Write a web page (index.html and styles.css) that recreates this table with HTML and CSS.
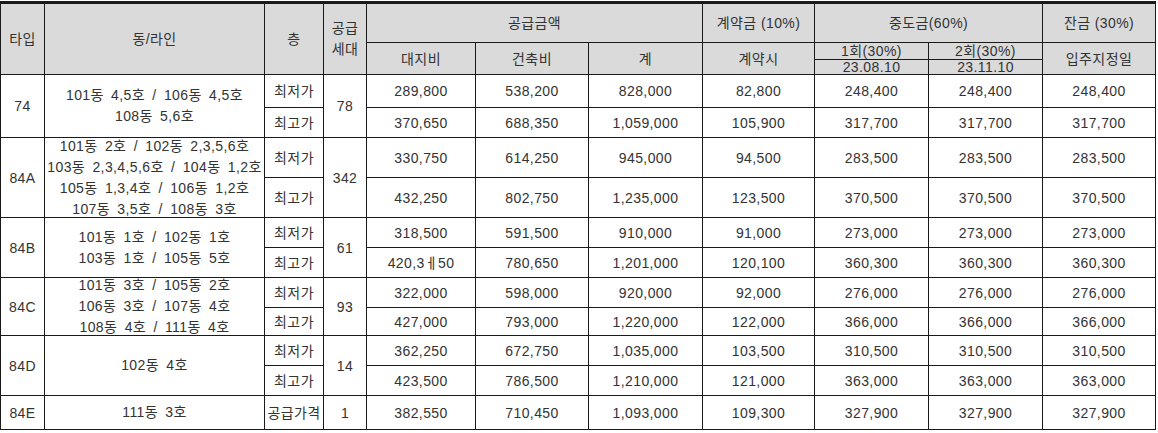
FILE: index.html
```html
<!DOCTYPE html>
<html lang="ko">
<head>
<meta charset="utf-8">
<title>공급금액</title>
<link rel="stylesheet" href="styles.css">
</head>
<body>
<div class="table">
  <div class="c h rs2">타입</div>
  <div class="c h rs2">동/라인</div>
  <div class="c h rs2">층</div>
  <div class="c h rs2 two">공급<br>세대</div>
  <div class="c h cs3">공급금액</div>
  <div class="c h">계약금 (10%)</div>
  <div class="c h cs2">중도금(60%)</div>
  <div class="c h">잔금 (30%)</div>

  <div class="c h">대지비</div>
  <div class="c h">건축비</div>
  <div class="c h">계</div>
  <div class="c h">계약시</div>
  <div class="c h split"><span class="top">1회(30%)</span><span class="bot">23.08.10</span></div>
  <div class="c h split"><span class="top">2회(30%)</span><span class="bot">23.11.10</span></div>
  <div class="c h">입주지정일</div>

  <!-- 74 -->
  <div class="c rs2">74</div>
  <div class="c rs2 lines">101동 4,5호 / 106동 4,5호<br>108동 5,6호</div>
  <div class="c">최저가</div>
  <div class="c rs2">78</div>
  <div class="c">289,800</div><div class="c">538,200</div><div class="c">828,000</div><div class="c">82,800</div><div class="c">248,400</div><div class="c">248,400</div><div class="c">248,400</div>
  <div class="c">최고가</div>
  <div class="c">370,650</div><div class="c">688,350</div><div class="c">1,059,000</div><div class="c">105,900</div><div class="c">317,700</div><div class="c">317,700</div><div class="c">317,700</div>

  <!-- 84A -->
  <div class="c rs2">84A</div>
  <div class="c rs2 lines">101동 2호 / 102동 2,3,5,6호<br>103동 2,3,4,5,6호 / 104동 1,2호<br>105동 1,3,4호 / 106동 1,2호<br>107동 3,5호 / 108동 3호</div>
  <div class="c">최저가</div>
  <div class="c rs2">342</div>
  <div class="c">330,750</div><div class="c">614,250</div><div class="c">945,000</div><div class="c">94,500</div><div class="c">283,500</div><div class="c">283,500</div><div class="c">283,500</div>
  <div class="c">최고가</div>
  <div class="c">432,250</div><div class="c">802,750</div><div class="c">1,235,000</div><div class="c">123,500</div><div class="c">370,500</div><div class="c">370,500</div><div class="c">370,500</div>

  <!-- 84B -->
  <div class="c rs2">84B</div>
  <div class="c rs2 lines">101동 1호 / 102동 1호<br>103동 1호 / 105동 5호</div>
  <div class="c">최저가</div>
  <div class="c rs2">61</div>
  <div class="c">318,500</div><div class="c">591,500</div><div class="c">910,000</div><div class="c">91,000</div><div class="c">273,000</div><div class="c">273,000</div><div class="c">273,000</div>
  <div class="c">최고가</div>
  <div class="c">420,3ㅔ50</div><div class="c">780,650</div><div class="c">1,201,000</div><div class="c">120,100</div><div class="c">360,300</div><div class="c">360,300</div><div class="c">360,300</div>

  <!-- 84C -->
  <div class="c rs2">84C</div>
  <div class="c rs2 lines">101동 3호 / 105동 2호<br>106동 3호 / 107동 4호<br>108동 4호 / 111동 4호</div>
  <div class="c">최저가</div>
  <div class="c rs2">93</div>
  <div class="c">322,000</div><div class="c">598,000</div><div class="c">920,000</div><div class="c">92,000</div><div class="c">276,000</div><div class="c">276,000</div><div class="c">276,000</div>
  <div class="c">최고가</div>
  <div class="c">427,000</div><div class="c">793,000</div><div class="c">1,220,000</div><div class="c">122,000</div><div class="c">366,000</div><div class="c">366,000</div><div class="c">366,000</div>

  <!-- 84D -->
  <div class="c rs2">84D</div>
  <div class="c rs2 lines">102동 4호</div>
  <div class="c">최저가</div>
  <div class="c rs2">14</div>
  <div class="c">362,250</div><div class="c">672,750</div><div class="c">1,035,000</div><div class="c">103,500</div><div class="c">310,500</div><div class="c">310,500</div><div class="c">310,500</div>
  <div class="c">최고가</div>
  <div class="c">423,500</div><div class="c">786,500</div><div class="c">1,210,000</div><div class="c">121,000</div><div class="c">363,000</div><div class="c">363,000</div><div class="c">363,000</div>

  <!-- 84E -->
  <div class="c">84E</div>
  <div class="c lines">111동 3호</div>
  <div class="c">공급가격</div>
  <div class="c">1</div>
  <div class="c">382,550</div><div class="c">710,450</div><div class="c">1,093,000</div><div class="c">109,300</div><div class="c">327,900</div><div class="c">327,900</div><div class="c">327,900</div>
</div>
</body>
</html>
```

FILE: styles.css
```css
html, body {
  margin: 0;
  padding: 0;
  background: #fff;
}

body {
  font-family: "Liberation Sans", "Noto Sans CJK KR", sans-serif;
  font-size: 14px;
  color: #333;
}

.table {
  display: grid;
  grid-template-columns: 44px 220px 59px 43px 109px 113px 114px 112px 114px 114px 113px;
  grid-template-rows: 39px 32px 33px 30px 40px 40px 30px 30px 30px 28px 30px 30px 34px;
  width: 1156px;
  box-sizing: border-box;
  margin-top: 1px;
  border-top: 3px solid #1a1a1a;
  border-left: 1px solid #1a1a1a;
}

.c {
  box-sizing: border-box;
  border-right: 1px solid #1a1a1a;
  border-bottom: 1px solid #1a1a1a;
  display: flex;
  align-items: center;
  justify-content: center;
  text-align: center;
  white-space: nowrap;
  letter-spacing: 0.4px;
  line-height: 16px;
  min-height: 0;
  overflow: visible;
}

.h {
  background: #dadada;
}

.rs2 { grid-row: span 2; }
.cs2 { grid-column: span 2; }
.cs3 { grid-column: span 3; }

.two {
  line-height: 21px;
}

.lines {
  line-height: 21px;
  word-spacing: 3px;
}

.split {
  flex-direction: column;
  align-items: stretch;
  justify-content: flex-start;
}

.split .top {
  height: 17px;
  line-height: 17px;
  box-sizing: border-box;
  border-bottom: 1px solid #1a1a1a;
}

.split .bot {
  flex: 1;
  line-height: 14px;
}
```
